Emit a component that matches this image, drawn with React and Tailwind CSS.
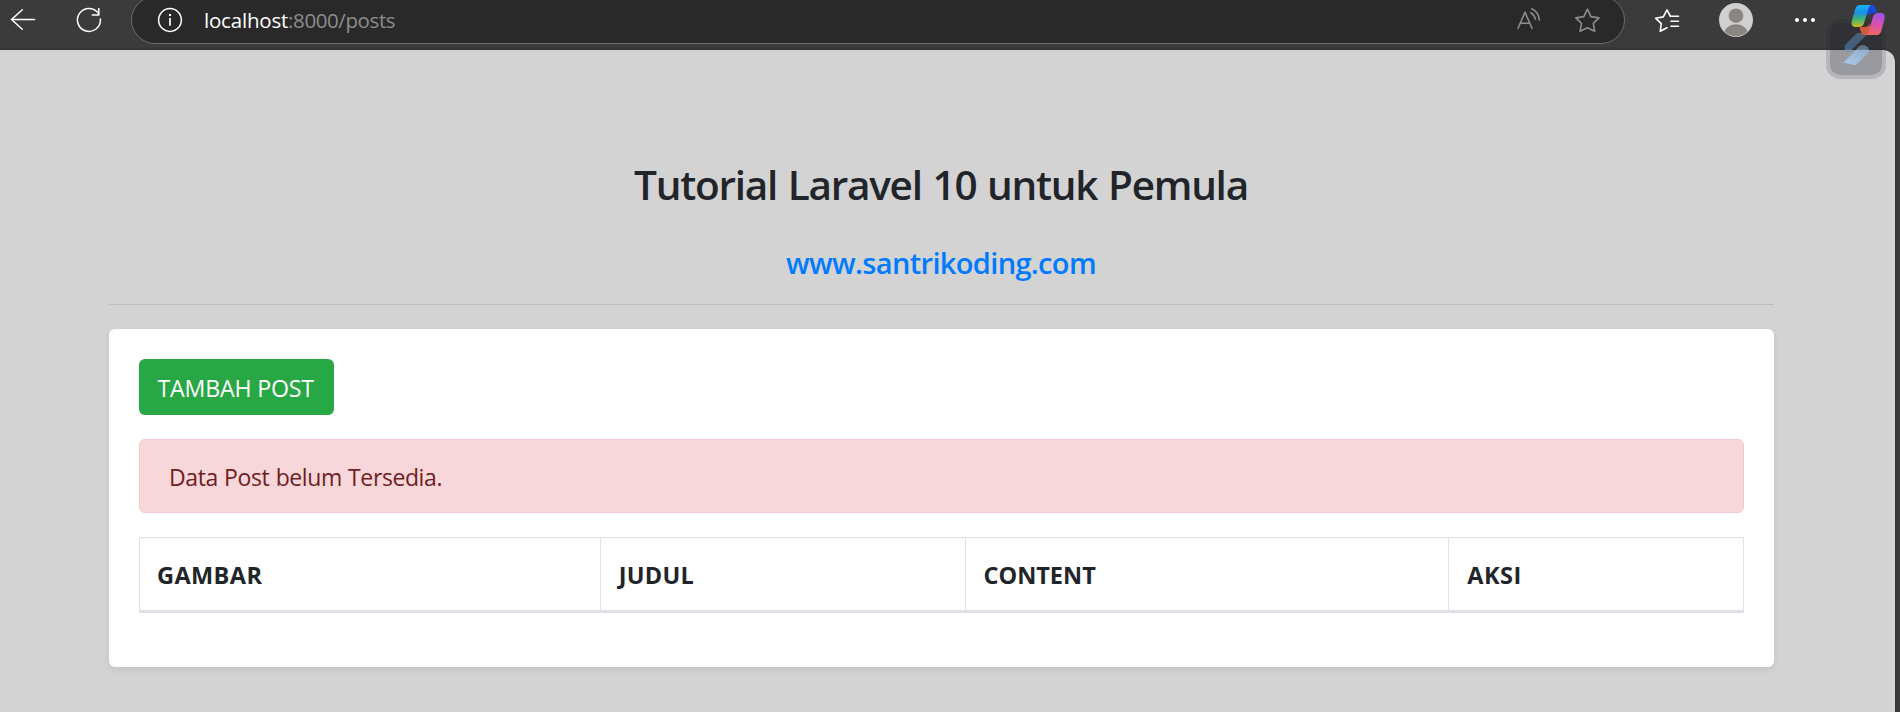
const columns = [
  { label: "GAMBAR", cell: "w-[461px] pl-[17px] tracking-[0.4px]" },
  { label: "JUDUL", cell: "w-[366px] pl-[18px] tracking-[0.3px]" },
  { label: "CONTENT", cell: "w-[483px] pl-[17px]" },
  { label: "AKSI", cell: "w-[295px] pl-[18px] tracking-[0.5px]" },
];

function BackIcon() {
  return (
    <svg className="h-10 w-9" viewBox="0 0 36 40" fill="none" stroke="#fff" strokeWidth="1.5" strokeLinecap="round" strokeLinejoin="round">
      <path d="M34.5 19.5H11.5M22.3 9.7L11.5 19.5L22.3 29.2" />
    </svg>
  );
}

function ReloadIcon() {
  return (
    <svg className="ml-9 h-10 w-8" viewBox="72 0 32 40" fill="none" stroke="#fff" strokeWidth="1.5" strokeLinecap="round" strokeLinejoin="round">
      <path d="M100.4 18.9A11.5 11.5 0 1 1 98.4 13.4" />
      <path d="M98.8 8.5V14.9H92.3" />
    </svg>
  );
}

function InfoIcon() {
  return (
    <svg className="h-10 w-7" viewBox="156 0 28 40" fill="none" stroke="#fff">
      <circle cx="170" cy="20" r="11.4" strokeWidth="1.5" />
      <path d="M170 18V25.8" strokeWidth="1.7" />
      <circle cx="170" cy="15" r="1.2" fill="#fff" stroke="none" />
    </svg>
  );
}

function ReadAloudIcon() {
  return (
    <svg className="h-10 w-8" viewBox="1514 0 32 40" fill="none" stroke="#8d8d8d" strokeWidth="1.6" strokeLinecap="round">
      <path d="M1518 28.3L1525 12.2L1532 28.3M1520.2 23.3H1529.8" strokeLinejoin="round" />
      <path d="M1530.8 12.8Q1534.6 15 1535.4 19.2M1531.8 8.8Q1538.5 12 1539.4 20" />
    </svg>
  );
}

function StarIcon() {
  return (
    <svg className="ml-6 h-10 w-8" viewBox="1570 0 32 40" fill="none" stroke="#8d8d8d" strokeWidth="1.6" strokeLinejoin="round">
      <path d="M1587.4 9.2L1591 16.6L1599 17.9L1593.3 23.4L1594.7 31.3L1587.4 27.8L1580.1 31.3L1581.5 23.4L1575.8 17.9L1583.8 16.6Z" />
    </svg>
  );
}

function FavoritesIcon() {
  return (
    <svg className="ml-[25px] h-10 w-8" viewBox="1650 0 32 40" fill="none" stroke="#fff" strokeWidth="1.6" strokeLinejoin="round" strokeLinecap="round">
      <path d="M1670.4 16.3L1667 9.8L1663.3 16.9L1655.6 18.2L1661.3 23.6L1660.2 31.3L1667 27.7" />
      <path d="M1670.4 16.3H1678.5M1671 21.2H1678.5M1671 26.2H1678.5" />
    </svg>
  );
}

function Avatar() {
  return (
    <svg className="ml-9 h-10 w-9" viewBox="1718 0 36 40">
      <defs>
        <clipPath id="face">
          <circle cx="1736" cy="20" r="16.3" />
        </clipPath>
      </defs>
      <circle cx="1736" cy="20" r="17" fill="#d2d0ce" />
      <g clipPath="url(#face)" fill="#8a8682">
        <circle cx="1736" cy="15.7" r="7.3" />
        <ellipse cx="1736" cy="35" rx="12.3" ry="10.7" />
      </g>
    </svg>
  );
}

function MoreIcon() {
  return (
    <svg className="ml-[39px] h-10 w-6" viewBox="1793 0 24 40" fill="#fff">
      <circle cx="1797" cy="20" r="2" />
      <circle cx="1805" cy="20" r="2" />
      <circle cx="1813" cy="20" r="2" />
    </svg>
  );
}

function CopilotIcon() {
  return (
    <svg className="relative z-20 ml-[33px] h-10 w-10" viewBox="1850 0 40 40">
      <defs>
        <linearGradient id="cpLeft" x1="0" y1="0" x2="0" y2="1">
          <stop offset="0" stopColor="#18b4f0" />
          <stop offset="0.35" stopColor="#1a8ee6" />
          <stop offset="0.65" stopColor="#3fb573" />
          <stop offset="1" stopColor="#d3b81c" />
        </linearGradient>
        <linearGradient id="cpRight" x1="0.5" y1="0" x2="0.3" y2="1">
          <stop offset="0" stopColor="#a353e8" />
          <stop offset="0.5" stopColor="#dc4fae" />
          <stop offset="1" stopColor="#ef6a58" />
        </linearGradient>
      </defs>
      <path d="M1866 5H1872C1874.500 5 1875.300 6.500 1876 9L1877.400 13H1873C1870 13 1869 14 1868 17Z" fill="#1748d8" />
      <path d="M1871 35H1865C1862.300 35 1861.300 33.500 1860.600 31L1859.500 27H1864.500C1867.500 27 1868.500 26 1869.500 23Z" fill="#d4593a" />
      <path d="M1860.500 5H1871.500C1869.500 5.600 1869 7 1868.200 9.500L1864 23C1863 26 1861.500 27 1858.500 27H1855.500C1851.800 27 1851 24 1852 20.500L1855 9.500C1856 6.200 1857.500 5 1860.500 5Z" fill="url(#cpLeft)" />
      <path d="M1876.300 35H1865.500C1867.500 34.500 1868.200 33 1869 30.500L1873 17C1874 14 1875.500 13 1878.500 13H1881C1884.700 13 1885.300 16 1884.300 19.500L1881.500 30.500C1880.500 33.800 1879.300 35 1876.300 35Z" fill="url(#cpRight)" />
    </svg>
  );
}

function FloatingWidget() {
  return (
    <div className="absolute top-[19px] left-[1826px] z-10 h-[60px] w-[60px] rounded-[14px] border-4 border-[rgba(33,38,55,0.16)] bg-[rgba(24,28,50,0.31)] bg-clip-padding">
      <svg className="h-[52px] w-[52px]" viewBox="1830 23 52 52">
        <defs>
          <linearGradient id="wLow" x1="1" y1="0" x2="0" y2="1">
            <stop offset="0" stopColor="#8fa9c4" />
            <stop offset="1" stopColor="#aacbec" />
          </linearGradient>
          <linearGradient id="wTop" x1="1" y1="0" x2="0" y2="1">
            <stop offset="0" stopColor="#4c6073" />
            <stop offset="1" stopColor="#41607f" />
          </linearGradient>
        </defs>
        <path d="M1857 33H1868.500L1851 50.500C1848 53 1844.500 50.500 1844.500 47C1844.500 45.800 1845 45 1846 44Z" fill="url(#wTop)" />
        <path d="M1844.600 49.800H1851.700L1851 50.500C1848.800 52.400 1845.600 51.600 1844.600 49.800Z" fill="#7c9dc0" />
        <path d="M1843.500 62.500L1859 47C1862 44 1868.700 45.500 1868.700 51C1868.700 52.500 1868.200 53.400 1867 54.500L1855.500 65.300Z" fill="url(#wLow)" />
        <path d="M1856.200 49.800L1859 47C1861.500 44.500 1867.700 45.200 1868.600 49.800Z" fill="#5d7285" />
      </svg>
    </div>
  );
}

export default function App() {
  return (
    <div className="relative h-[712px] w-[1900px] overflow-hidden bg-[#3b3b3b] font-['Open_Sans','Noto_Sans',sans-serif]">
      <header className="flex h-[50px] items-start overflow-hidden">
        <BackIcon />
        <ReloadIcon />
        <div className="-mt-1 ml-[27px] flex h-[48px] w-[1494px] shrink-0 items-start rounded-full border border-[#6b6b6b] bg-[#292929] pt-[3px] pr-[22px] pl-6">
          <InfoIcon />
          <div className="ml-5 flex pt-2 text-[20.5px] leading-6">
            <span className="tracking-[-0.2px] text-white">localhost</span>
            <span className="tracking-[-0.4px] text-[#8d8d8d]">:8000/posts</span>
          </div>
          <div className="ml-auto flex">
            <ReadAloudIcon />
            <StarIcon />
          </div>
        </div>
        <FavoritesIcon />
        <Avatar />
        <MoreIcon />
        <CopilotIcon />
      </header>
      <FloatingWidget />

      <main className="h-[662px] w-[1895px] rounded-tr-[12px] bg-[#d3d3d3] pl-[109px] text-[#212529] shadow-[0_0_3px_rgba(0,0,0,0.35)]">
        <div className="flex w-[1665px] flex-col">
          <h3 className="pt-[110px] pr-px text-center text-[40.5px] leading-[50px] font-semibold tracking-[-1.25px] [word-spacing:1.5px]">
            Tutorial Laravel 10 untuk Pemula
          </h3>
          <h5 className="pt-[35px] pr-px text-center text-[29px] leading-[36px] font-semibold tracking-[-0.66px] text-[#007bff]">
            www.santrikoding.com
          </h5>
          <hr className="mt-[23px] border-t border-[#bdbdbd]" />

          <section className="mt-6 h-[338px] rounded-[6px] bg-white p-[30px] text-[23.5px] shadow-[0_3px_6px_rgba(0,0,0,0.075)]">
            <button className="flex h-14 w-[195px] items-center rounded-[6px] bg-[#28a745] pt-[2px] pl-[18.5px] text-[23.2px] tracking-[-0.2px] whitespace-nowrap text-white">
              TAMBAH POST
            </button>
            <div className="mt-6 flex h-[74px] items-center rounded-[6px] border border-[#f5c6cb] bg-[#f8d7da] pt-[2px] pl-[29px] text-[23px] tracking-[-0.4px] text-[#721c24] [word-spacing:0.7px]">
              Data Post belum Tersedia.
            </div>
            <div className="mt-6 flex h-[76px] border-t border-b-[3px] border-l border-[#dee2e6] font-bold">
              {columns.map((c) => (
                <div key={c.label} className={`flex items-center border-r border-[#dee2e6] pt-[3px] ${c.cell}`}>
                  {c.label}
                </div>
              ))}
            </div>
          </section>
        </div>
      </main>
    </div>
  );
}
